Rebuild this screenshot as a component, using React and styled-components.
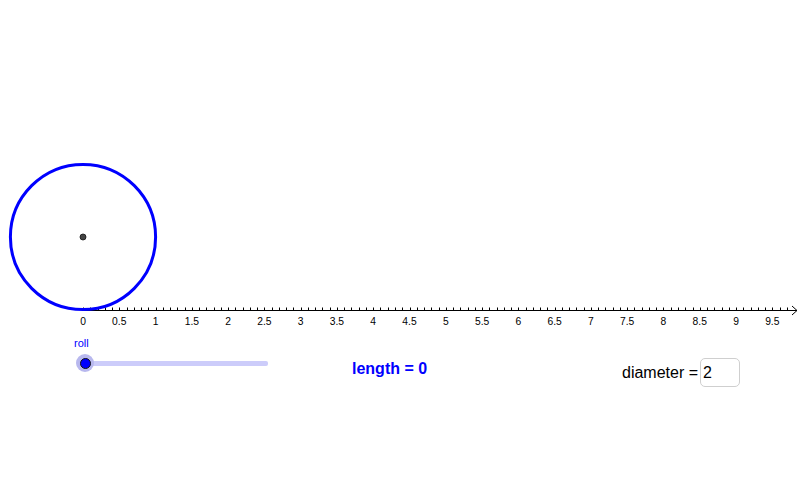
import React from "react";
import styled, { createGlobalStyle } from "styled-components";

const Global = createGlobalStyle`
  html, body { margin: 0; padding: 0; background: #ffffff; }
  body { font-family: "Liberation Sans", Arial, sans-serif; }
`;

const Page = styled.div`
  width: 800px;
  height: 495px;
  background: #ffffff;
  overflow: hidden;
  display: flex;
  flex-direction: column;
`;

const Drawing = styled.svg`
  display: block;
  flex: none;
`;

const Controls = styled.div`
  display: flex;
  align-items: flex-start;
  padding-left: 74px;
  font-family: "Liberation Sans", Arial, sans-serif;
`;

const SliderGroup = styled.div`
  width: 278px;
  padding-top: 2px;
  display: flex;
  flex-direction: column;
  gap: 4px;
`;

const SliderLabel = styled.div`
  font-size: 11px;
  line-height: 13px;
  color: #0000ff;
`;

const SliderBar = styled.div`
  position: relative;
  height: 18px;
`;

const SliderTrack = styled.div`
  position: absolute;
  left: 11px;
  top: 7px;
  width: 183px;
  height: 5px;
  border-radius: 2px;
  background: #ccccfa;
`;

const SliderKnob = styled.div`
  position: absolute;
  left: 2px;
  top: 0;
  width: 18px;
  height: 18px;
  border-radius: 50%;
  background: #b8b8ee;
  display: flex;
  align-items: center;
  justify-content: center;
  &::after {
    content: "";
    width: 11px;
    height: 11px;
    border-radius: 50%;
    background: #0000ff;
    border: 1px solid #111;
    box-sizing: border-box;
  }
`;

const LengthText = styled.div`
  width: 270px;
  margin-top: 25px;
  font-weight: bold;
  font-size: 16px;
  color: #0000ff;
`;

const InputRow = styled.div`
  margin-top: 23px;
  display: flex;
  align-items: center;
  font-size: 16px;
  color: #000;
`;

const InputBox = styled.div`
  width: 40px;
  height: 29px;
  margin-left: 2px;
  border: 1px solid #cfcfcf;
  border-radius: 5px;
  box-sizing: border-box;
  display: flex;
  align-items: center;
  padding-left: 2px;
  font-size: 16px;
  color: #000;
`;

const scale = 72.56;
const ox = 83;
const axisY = 310;

function Axis() {
  const ticks = [];
  for (let i = 0; i <= 99; i++) {
    const x = Math.round(ox + (i / 10) * scale) + 0.5;
    if (x > 792) break;
    ticks.push(
      <line key={"t" + i} x1={x} y1={axisY - 2.5} x2={x} y2={axisY} stroke="#000" strokeWidth="1" />
    );
  }
  const labels = [];
  for (let i = 0; i <= 19; i++) {
    const v = i / 2;
    const x = ox + v * scale;
    labels.push(
      <text
        key={"l" + i}
        x={x}
        y={325}
        textAnchor="middle"
        fontFamily="Liberation Sans, Arial, sans-serif"
        fontSize="10.3"
        fill="#000"
      >
        {String(v)}
      </text>
    );
  }
  return (
    <g>
      <line x1={ox} y1={axisY + 0.5} x2={797} y2={axisY + 0.5} stroke="#000" strokeWidth="1" />
      {ticks}
      <polyline points={`792,${axisY - 4} 797,${axisY + 0.5} 792,${axisY + 5}`} fill="none" stroke="#000" strokeWidth="1" />
      {labels}
    </g>
  );
}

export default function App() {
  return (
    <>
      <Global />
      <Page>
        <Drawing width="800" height="335" viewBox="0 0 800 335">
          <Axis />
          <circle cx={ox} cy={237} r={72.6} fill="none" stroke="#0000ff" strokeWidth="3" />
          <circle cx={ox} cy={237} r={3} fill="#444" stroke="#111" strokeWidth="0.8" />
        </Drawing>
        <Controls>
          <SliderGroup>
            <SliderLabel>roll</SliderLabel>
            <SliderBar>
              <SliderTrack />
              <SliderKnob />
            </SliderBar>
          </SliderGroup>
          <LengthText>length = 0</LengthText>
          <InputRow>
            diameter =
            <InputBox>2</InputBox>
          </InputRow>
        </Controls>
      </Page>
    </>
  );
}
